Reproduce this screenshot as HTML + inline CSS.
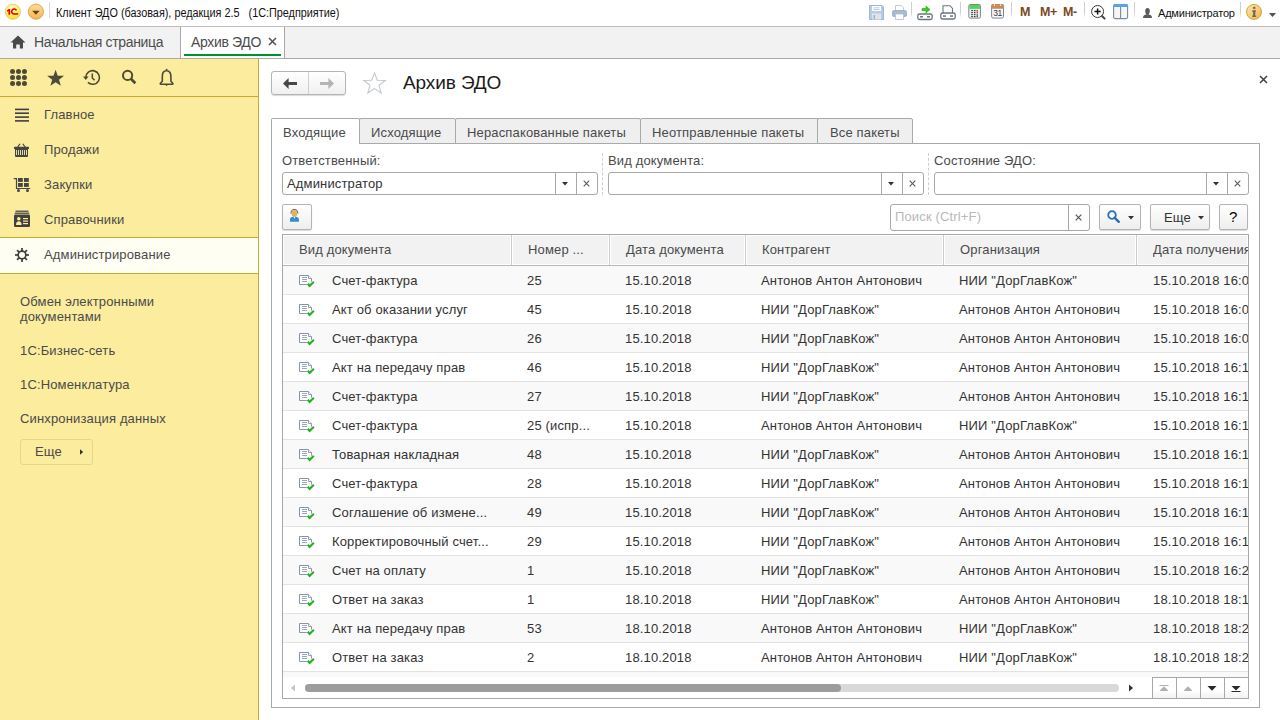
<!DOCTYPE html>
<html><head><meta charset="utf-8">
<style>
*{box-sizing:border-box;margin:0;padding:0}
html,body{width:1280px;height:720px;overflow:hidden;background:#fff;font-family:"Liberation Sans",sans-serif;color:#4d4d4d}
.a{position:absolute}
.t{position:absolute;white-space:nowrap;line-height:16px;letter-spacing:0.15px}
svg{position:absolute;overflow:visible}
</style></head><body>

<!-- ===== TITLE BAR ===== -->
<div class="a" style="left:0;top:26px;width:1280px;height:1px;background:#bcbcbc"></div>
<!-- logo -->
<svg style="left:0;top:0" width="50" height="25" viewBox="0 0 50 25">
 <defs><radialGradient id="g1c" cx="0.45" cy="0.3" r="0.75"><stop offset="0" stop-color="#fffbd0"/><stop offset="0.55" stop-color="#fff06a"/><stop offset="1" stop-color="#ffd800"/></radialGradient>
 <linearGradient id="gdd" x1="0" y1="0" x2="0" y2="1"><stop offset="0" stop-color="#ffdc95"/><stop offset="1" stop-color="#f8b350"/></linearGradient></defs>
 <circle cx="12.9" cy="11.7" r="7.6" fill="url(#g1c)" stroke="#dcc86a" stroke-width="0.8"/>
 <path d="M7 10.3 L9 9 H10.2 V14.8 H8.4 V11 L7 11.8 Z" fill="#e20000"/>
 <path d="M16.4 10.4 A2.5 2.5 0 1 0 13.9 14 H18.2" fill="none" stroke="#e20000" stroke-width="1.6"/>
 <circle cx="35.9" cy="11.7" r="7.6" fill="url(#gdd)" stroke="#c9a050" stroke-width="0.8"/>
 <path d="M32.2 10.8 H39.6 L35.9 14.8 Z" fill="#5a4326"/>
</svg>
<div class="a" style="left:49px;top:2px;width:1px;height:16px;background:#d8d8d8"></div>
<div class="t" style="left:56px;top:5px;font-size:12px;letter-spacing:0;transform:scaleX(0.903);transform-origin:0 0;color:#111">Клиент ЭДО (базовая), редакция 2.5&nbsp;&nbsp;&nbsp;(1С:Предприятие)</div>

<!-- right toolbar icons -->
<svg style="left:869px;top:5px" width="15" height="15" viewBox="0 0 15 15">
 <path d="M0.5 0.5 H13 L14.5 2 V14.5 H0.5 Z" fill="#b7cce6" stroke="#9fb5d3"/>
 <rect x="3" y="1" width="9" height="5" fill="#fff"/>
 <path d="M4.5 2.8 H10.5 M4.5 4.5 H10.5" stroke="#a9bcd6" stroke-width="0.8"/>
 <rect x="3" y="8.5" width="9" height="6" fill="#e2e5e8"/>
 <rect x="4.5" y="10" width="1.6" height="4" fill="#9fb5d3"/>
</svg>
<svg style="left:892px;top:5px" width="15" height="15" viewBox="0 0 15 15">
 <path d="M3.5 0.5 H9.5 L11.5 2.5 V6 H3.5 Z" fill="#fff" stroke="#b0bfd2" stroke-width="0.8"/>
 <rect x="0.5" y="5.5" width="14" height="6" rx="1.5" fill="#a9bbd2" stroke="#98abc4" stroke-width="0.8"/>
 <rect x="3.5" y="9" width="8" height="5.5" fill="#fff" stroke="#b0bfd2" stroke-width="0.8"/>
</svg>
<div class="a" style="left:911px;top:2px;width:1px;height:16px;background:linear-gradient(#cfcfcf 65%,#fff)"></div>
<svg style="left:917px;top:5px" width="16" height="15" viewBox="0 0 16 15">
 <path d="M5 3.5 H9 V1 L13 4.5 L9 8 V5.5 H5 Z" fill="#2fd11c" stroke="#1aa80c" stroke-width="0.6"/>
 <rect x="0.8" y="9" width="14.4" height="5.5" rx="1.8" fill="#fff" stroke="#6d7581" stroke-width="1.3"/>
 <rect x="3" y="11" width="3" height="1.5" fill="#6d7581"/><rect x="10" y="11" width="3" height="1.5" fill="#6d7581"/>
</svg>
<svg style="left:940px;top:5px" width="16" height="15" viewBox="0 0 16 15">
 <path d="M3 0.7 H10 L12.5 3.5 V9 H3 Z" fill="#fff" stroke="#6d7581" stroke-width="1.1"/>
 <rect x="0.8" y="8" width="14.4" height="6" rx="1.8" fill="#fff" stroke="#6d7581" stroke-width="1.3"/>
 <rect x="3" y="10.3" width="3" height="1.5" fill="#6d7581"/><rect x="10" y="10.3" width="3" height="1.5" fill="#6d7581"/>
</svg>
<div class="a" style="left:960px;top:2px;width:1px;height:16px;background:linear-gradient(#cfcfcf 65%,#fff)"></div>
<svg style="left:962px;top:0" width="50" height="24" viewBox="0 0 50 24">
 <rect x="6.8" y="4.5" width="11.6" height="13.6" rx="1.3" fill="#eef3f8" stroke="#7e8893" stroke-width="1"/>
 <rect x="7.3" y="5" width="10.6" height="3.9" fill="#4fd64f"/>
 <g fill="#3a3a3a">
  <rect x="9.2" y="9.9" width="1.6" height="1.2"/><rect x="11.9" y="9.9" width="1.6" height="1.2"/>
  <rect x="9.2" y="11.9" width="1.6" height="1.2"/><rect x="11.9" y="11.9" width="1.6" height="1.2"/><rect x="14.7" y="12" width="1.1" height="1"/>
  <rect x="9.2" y="13.9" width="1.6" height="1.2"/><rect x="11.9" y="13.9" width="1.6" height="1.2"/><rect x="14.6" y="13.6" width="1.2" height="1.2"/>
  <rect x="9.2" y="15.9" width="1.6" height="1.2"/><rect x="11.9" y="15.9" width="1.6" height="1.2"/><rect x="14.6" y="15.2" width="1.2" height="2"/>
 </g>
 <rect x="14.5" y="9.7" width="1.4" height="2.1" rx="0.5" fill="#f03030"/>
 <rect x="29.6" y="4.5" width="11.9" height="13.6" rx="1.6" fill="#f4f7fb" stroke="#7e8893" stroke-width="1"/>
 <path d="M29.1 8.8 V6.2 Q29.1 4 31.3 4 H39.8 Q42 4 42 6.2 V8.8 Z" fill="#c98b5a"/>
 <rect x="32.1" y="4.4" width="0.9" height="1.6" fill="#fff"/><rect x="38.2" y="4.4" width="0.9" height="1.6" fill="#fff"/>
 <text x="35.6" y="16.3" text-anchor="middle" font-family="Liberation Sans" font-size="8.5" fill="#333" letter-spacing="-0.3">31</text>
</svg>
<div class="a" style="left:1011px;top:2px;width:1px;height:16px;background:linear-gradient(#cfcfcf 65%,#fff)"></div>
<div class="t" style="left:1020px;top:4px;font-size:12.5px;font-weight:bold;color:#7b4a1f;letter-spacing:0">M</div>
<div class="t" style="left:1040px;top:4px;font-size:12.5px;font-weight:bold;color:#7b4a1f;letter-spacing:-0.3px">M+</div>
<div class="t" style="left:1063px;top:4px;font-size:12.5px;font-weight:bold;color:#7b4a1f;letter-spacing:-0.3px">M-</div>
<div class="a" style="left:1084px;top:2px;width:1px;height:16px;background:linear-gradient(#cfcfcf 65%,#fff)"></div>
<svg style="left:1085px;top:0" width="75" height="24" viewBox="0 0 75 24">
 <circle cx="12.6" cy="11.5" r="6" fill="#fff" stroke="#3a3a3a" stroke-width="1"/>
 <path d="M9.5 11.5 H15.7 M12.6 8.4 V14.6" stroke="#111" stroke-width="1.5"/>
 <path d="M17 16 L19.6 18.6" stroke="#444" stroke-width="2" stroke-linecap="round"/>
 <rect x="28.6" y="4.6" width="14" height="14" rx="1.5" fill="#f4f6f8" stroke="#7b8a99" stroke-width="1.1"/>
 <path d="M28.1 6.2 Q28.1 4.1 30.2 4.1 H41 Q43.1 4.1 43.1 6.2 V6.9 H28.1 Z" fill="#58a2e8"/>
 <path d="M35.6 6.9 V18.6" stroke="#7b8a99" stroke-width="1.1"/>
 <path d="M58 18 Q58 15 61.5 14.6 Q60.2 13.3 60.2 11 Q60.2 8 62.5 8 Q64.8 8 64.8 11 Q64.8 13.3 63.5 14.6 Q67 15 67 18 Z" fill="#5a5a5a"/>
</svg>
<div class="a" style="left:1134px;top:2px;width:1px;height:16px;background:linear-gradient(#cfcfcf 65%,#fff)"></div>

<div class="t" style="left:1158px;top:5px;font-size:11px;letter-spacing:-0.2px;color:#111">Администратор</div>
<div class="a" style="left:1240px;top:2px;width:1px;height:16px;background:linear-gradient(#cfcfcf 65%,#fff)"></div>
<svg style="left:1238px;top:0" width="42" height="24" viewBox="0 0 42 24">
 <defs><linearGradient id="ginf" x1="0" y1="0" x2="1" y2="1"><stop offset="0" stop-color="#fde6b0"/><stop offset="1" stop-color="#f6b445"/></linearGradient></defs>
 <circle cx="16" cy="11.9" r="7.5" fill="url(#ginf)" stroke="#c99c35" stroke-width="0.9"/>
 <g fill="#6e6a5e">
 <ellipse cx="16.2" cy="7.9" rx="1.4" ry="1.1"/>
 <rect x="14.2" y="10.4" width="3.8" height="1.3"/>
 <rect x="15.1" y="10.4" width="2.2" height="6.4"/>
 <rect x="14.1" y="15.6" width="4.1" height="1.3"/>
 </g>
 <path d="M31 13 H38 L34.5 17 Z" fill="#505050"/>
</svg>
<!-- ===== TAB BAR ===== -->
<div class="a" style="left:0;top:27px;width:1280px;height:31px;background:#f2f2f2"></div>
<div class="a" style="left:0;top:58px;width:1280px;height:1px;background:#a9a9a9"></div>
<div class="a" style="left:180px;top:27px;width:1px;height:31px;background:#a9a9a9"></div>
<div class="a" style="left:181px;top:27px;width:103px;height:31px;background:#fff"></div>
<div class="a" style="left:284px;top:27px;width:1px;height:31px;background:#a9a9a9"></div>
<div class="a" style="left:184px;top:54px;width:97px;height:2px;background:#00922e"></div>
<svg style="left:10px;top:35px" width="16" height="14" viewBox="0 0 16 14">
 <path d="M8 0.5 L15.5 7.5 H13 V13.5 H9.8 V9.5 H6.2 V13.5 H3 V7.5 H0.5 Z" fill="#4a4a4a"/>
</svg>
<div class="t" style="left:34px;top:34px;font-size:14px;letter-spacing:-0.35px;color:#4d4d4d">Начальная страница</div>
<div class="t" style="left:191px;top:34px;font-size:14px;letter-spacing:-0.35px;color:#4d4d4d">Архив ЭДО</div>
<svg style="left:268px;top:37px" width="9" height="9" viewBox="0 0 9 9"><path d="M1 1 L8 8 M8 1 L1 8" stroke="#555" stroke-width="1.6"/></svg>

<!-- ===== SIDEBAR ===== -->
<div class="a" style="left:0;top:59px;width:258px;height:661px;background:#fbec9e"></div>
<div class="a" style="left:258px;top:59px;width:1px;height:661px;background:#c6ab2c"></div>
<div class="a" style="left:0;top:96px;width:258px;height:1px;background:#c6ab2c"></div>
<div class="a" style="left:0;top:237px;width:258px;height:37px;background:#fffef2;border-top:1px solid #c6ab2c;border-bottom:1px solid #c6ab2c"></div>

<svg style="left:10px;top:69px" width="18" height="18" viewBox="0 0 18 18" fill="#4d4a38">
 <circle cx="2.55" cy="2.55" r="2.5"/> <circle cx="8.5" cy="2.55" r="2.5"/> <circle cx="14.45" cy="2.55" r="2.5"/> <circle cx="2.55" cy="8.5" r="2.5"/> <circle cx="8.5" cy="8.5" r="2.5"/> <circle cx="14.45" cy="8.5" r="2.5"/> <circle cx="2.55" cy="14.45" r="2.5"/> <circle cx="8.5" cy="14.45" r="2.5"/> <circle cx="14.45" cy="14.45" r="2.5"/>
</svg>
<svg style="left:47px;top:69px" width="18" height="18" viewBox="0 0 18 18"><path d="M8.60 0.70 L10.72 6.69 L17.06 6.85 L12.02 10.71 L13.83 16.80 L8.60 13.20 L3.37 16.80 L5.18 10.71 L0.14 6.85 L6.48 6.69 Z" fill="#4d4a38"/></svg>
<svg style="left:83px;top:69px" width="18" height="18" viewBox="0 0 18 18">
 <path d="M2.8 8.6 A6.8 6.8 0 1 1 4.9 13.4" fill="none" stroke="#4d4a38" stroke-width="1.6"/>
 <path d="M0 7.6 L5.6 7.6 L2.8 11 Z" fill="#4d4a38"/>
 <path d="M9.3 4.4 V9 L11.6 11.3" fill="none" stroke="#4d4a38" stroke-width="1.5"/>
</svg>
<svg style="left:121px;top:69px" width="18" height="18" viewBox="0 0 18 18">
 <circle cx="6.6" cy="6.4" r="4.6" fill="none" stroke="#4d4a38" stroke-width="2"/>
 <path d="M9.8 9.6 L14.3 14.3" stroke="#4d4a38" stroke-width="2.8"/>
</svg>
<svg style="left:158px;top:69px" width="18" height="18" viewBox="0 0 18 18">
 <path d="M8.6 1.8 C5.3 1.8 4.3 4.6 4.3 7.4 V12.3 L2.4 14.3 Q2 15 2.8 15.2 H14.4 Q15.2 15 14.8 14.3 L12.9 12.3 V7.4 C12.9 4.6 11.9 1.8 8.6 1.8 Z" fill="none" stroke="#4d4a38" stroke-width="1.6" stroke-linejoin="round"/>
 <path d="M7.3 0.9 L8.6 -0.4 L9.9 0.9 Z" fill="#4d4a38"/>
 <path d="M7.1 15.8 L8.6 17 L10.1 15.8 Z" fill="#4d4a38"/>
</svg>

<svg style="left:15px;top:108px" width="15" height="14" viewBox="0 0 15 14" fill="#3e3e4a">
 <rect x="0" y="0.6" width="14" height="1.6"/><rect x="0" y="4.4" width="14" height="1.6"/><rect x="0" y="8.3" width="14" height="1.6"/><rect x="0" y="12.1" width="14" height="1.6"/>
</svg>
<svg style="left:0;top:0" width="40" height="280" viewBox="0 0 40 280">
 <!-- basket -->
 <path d="M17.3 147.5 L19.8 144.2 M25.5 147.5 L23 144.2" stroke="#454545" stroke-width="1.1" stroke-linecap="round"/>
 <rect x="14" y="146.8" width="15" height="2.2" rx="0.6" fill="#454545"/>
 <path d="M15 148.5 H28 V156 Q28 157 27 157 H16 Q15 157 15 156 Z" fill="#454545"/>
 <g fill="#fbec9e"><rect x="16.1" y="150" width="0.9" height="5"/><rect x="18.1" y="150" width="0.9" height="5"/><rect x="20.1" y="150" width="0.9" height="5"/><rect x="22.1" y="150" width="0.9" height="5"/><rect x="24.1" y="150" width="0.9" height="5"/><rect x="26.1" y="150" width="0.9" height="5"/></g>
 <!-- cart -->
 <path d="M14.2 178.6 H16.5 V188.5 H29.8" fill="none" stroke="#454545" stroke-width="1.2" stroke-linecap="round"/>
 <g fill="#454545"><rect x="18" y="178" width="4.8" height="3.9"/><rect x="24" y="178" width="4.8" height="3.9"/><rect x="18" y="183" width="4.8" height="3.9"/><rect x="24" y="183" width="4.8" height="3.9"/>
 <circle cx="18.5" cy="190.6" r="1.5"/><circle cx="27.5" cy="190.6" r="1.5"/></g>
 <!-- card -->
 <g fill="#404040">
 <rect x="15.5" y="210.6" width="13" height="1.2"/><rect x="14.8" y="212.6" width="14.4" height="1.2"/>
 <rect x="14" y="214.6" width="16" height="12.4" rx="1.2"/>
 </g>
 <g fill="#fbec9e">
 <circle cx="18.8" cy="218.8" r="1.8"/>
 <path d="M16 225 Q16 221.3 18.8 221.3 Q21.6 221.3 21.6 225 Z"/>
 <rect x="23" y="218" width="5" height="1.2"/><rect x="23" y="220.5" width="5" height="1.2"/><rect x="23" y="223" width="5" height="1.2"/>
 </g>
 <!-- gear -->
 <g transform="translate(22 255)" fill="#3f3f3f">
  <rect x="-0.85" y="-7" width="1.7" height="14"/>
  <rect x="-0.85" y="-7" width="1.7" height="14" transform="rotate(45)"/>
  <rect x="-0.85" y="-7" width="1.7" height="14" transform="rotate(90)"/>
  <rect x="-0.85" y="-7" width="1.7" height="14" transform="rotate(135)"/>
  <circle r="4.7"/>
  <circle r="3" fill="#fffef2"/>
 </g>
</svg>
<div class="t" style="left:44px;top:107px;font-size:13px;color:#4a4a4a">Главное</div>
<div class="t" style="left:44px;top:142px;font-size:13px;color:#4a4a4a">Продажи</div>
<div class="t" style="left:44px;top:177px;font-size:13px;color:#4a4a4a">Закупки</div>
<div class="t" style="left:44px;top:212px;font-size:13px;color:#4a4a4a">Справочники</div>
<div class="t" style="left:44px;top:247px;font-size:13px;color:#4a4a4a">Администрирование</div>

<div class="t" style="left:20px;top:294px;font-size:13px;line-height:15px;color:#4a4a4a">Обмен электронными<br>документами</div>
<div class="t" style="left:20px;top:343px;font-size:13px;color:#4a4a4a">1С:Бизнес-сеть</div>
<div class="t" style="left:20px;top:377px;font-size:13px;color:#4a4a4a">1С:Номенклатура</div>
<div class="t" style="left:20px;top:411px;font-size:13px;color:#4a4a4a">Синхронизация данных</div>
<div class="a" style="left:20px;top:439px;width:73px;height:26px;border:1px solid #e6d58a;border-radius:3px;background:#fbec9e"></div>
<div class="t" style="left:35px;top:444px;font-size:13px;color:#4a4a4a">Еще</div>
<svg style="left:80px;top:449px" width="4" height="6" viewBox="0 0 4 6"><path d="M0 0.2 L3.2 3 L0 5.8 Z" fill="#333"/></svg>

<!-- ===== FORM HEADER ===== -->
<div class="a" style="left:271px;top:71px;width:75px;height:24px;border:1px solid #b4b4b4;border-radius:3px;background:linear-gradient(#ffffff,#f0f0f0);box-shadow:0 1px 1px rgba(0,0,0,0.15)"></div>
<div class="a" style="left:308px;top:72px;width:1px;height:22px;background:#cfcfcf"></div>
<svg style="left:283px;top:78px" width="14" height="11" viewBox="0 0 14 11"><path d="M0 5.5 L5.6 0 V4 H14 V7 H5.6 V11 Z" fill="#484848"/></svg>
<svg style="left:320px;top:78px" width="14" height="11" viewBox="0 0 14 11"><path d="M14 5.5 L8.4 0 V4 H0 V7 H8.4 V11 Z" fill="#b4b4b4"/></svg>
<svg style="left:362px;top:72px" width="25" height="22" viewBox="0 0 25 22">
 <path d="M12.5 1 L15.3 8.2 L23.3 8.4 L17 13.3 L19.2 21 L12.5 16.6 L5.8 21 L8 13.3 L1.7 8.4 L9.7 8.2 Z" fill="none" stroke="#c5c9cf" stroke-width="1.1" stroke-linejoin="miter"/>
</svg>
<div class="t" style="left:403px;top:72px;font-size:19px;line-height:22px;letter-spacing:-0.1px;color:#1a1a1a">Архив ЭДО</div>
<svg style="left:1259px;top:75px" width="9" height="9" viewBox="0 0 9 9"><path d="M1 1 L8 8 M8 1 L1 8" stroke="#404040" stroke-width="1.5"/></svg>

<!-- page tabs -->
<div class="a" style="left:271px;top:143px;width:989px;height:565px;border:1px solid #a9a9a9;background:#fff"></div>
<div class="a" style="left:271px;top:118px;width:89px;height:26px;border:1px solid #a9a9a9;border-bottom:none;background:#fff;border-radius:2px 2px 0 0"></div>
<div class="a" style="left:359px;top:118px;width:97px;height:26px;border:1px solid #a9a9a9;background:#efefef;border-radius:2px 2px 0 0"></div>
<div class="a" style="left:455px;top:118px;width:186px;height:26px;border:1px solid #a9a9a9;background:#efefef;border-radius:2px 2px 0 0"></div>
<div class="a" style="left:640px;top:118px;width:179px;height:26px;border:1px solid #a9a9a9;background:#efefef;border-radius:2px 2px 0 0"></div>
<div class="a" style="left:817px;top:118px;width:96px;height:26px;border:1px solid #a9a9a9;background:#efefef;border-radius:2px 2px 0 0"></div>
<div class="a" style="left:272px;top:143px;width:87px;height:1px;background:#fff"></div>
<div class="t" style="left:283px;top:125px;font-size:13px;color:#4a4a4a">Входящие</div>
<div class="t" style="left:371px;top:125px;font-size:13px;color:#4a4a4a">Исходящие</div>
<div class="t" style="left:467px;top:125px;font-size:13px;color:#4a4a4a">Нераспакованные пакеты</div>
<div class="t" style="left:652px;top:125px;font-size:13px;color:#4a4a4a">Неотправленные пакеты</div>
<div class="t" style="left:830px;top:125px;font-size:13px;color:#4a4a4a">Все пакеты</div>

<!-- filters -->
<div class="t" style="left:282px;top:153px;font-size:13px;color:#4a4a4a">Ответственный:</div>
<div class="t" style="left:608px;top:153px;font-size:13px;color:#4a4a4a">Вид документа:</div>
<div class="t" style="left:934px;top:153px;font-size:13px;color:#4a4a4a">Состояние ЭДО:</div>

<div class="a" style="left:282px;top:172px;width:316px;height:23px;border:1px solid #a8a8a8;border-radius:3px;background:#fff"></div>
<div class="a" style="left:555px;top:173px;width:1px;height:21px;background:#a8a8a8"></div>
<div class="a" style="left:576px;top:173px;width:1px;height:21px;background:#a8a8a8"></div>
<div class="t" style="left:287px;top:176px;font-size:13px;color:#333">Администратор</div>

<div class="a" style="left:608px;top:172px;width:316px;height:23px;border:1px solid #a8a8a8;border-radius:3px;background:#fff"></div>
<div class="a" style="left:881px;top:173px;width:1px;height:21px;background:#a8a8a8"></div>
<div class="a" style="left:902px;top:173px;width:1px;height:21px;background:#a8a8a8"></div>

<div class="a" style="left:934px;top:172px;width:315px;height:23px;border:1px solid #a8a8a8;border-radius:3px;background:#fff"></div>
<div class="a" style="left:1206px;top:173px;width:1px;height:21px;background:#a8a8a8"></div>
<div class="a" style="left:1227px;top:173px;width:1px;height:21px;background:#a8a8a8"></div>

<div class="a" style="left:602px;top:153px;width:0;height:42px;border-left:1px dashed #cfcfcf"></div>
<div class="a" style="left:928px;top:153px;width:0;height:42px;border-left:1px dashed #cfcfcf"></div>
<svg style="left:562px;top:182px" width="6" height="4" viewBox="0 0 6 4"><path d="M0 0 H6 L3 3.5 Z" fill="#333"/></svg>
<svg style="left:583px;top:180px" width="7" height="7" viewBox="0 0 7 7"><path d="M0.7 0.7 L6.3 6.3 M6.3 0.7 L0.7 6.3" stroke="#5a5a5a" stroke-width="1.1"/></svg>
<svg style="left:888px;top:182px" width="6" height="4" viewBox="0 0 6 4"><path d="M0 0 H6 L3 3.5 Z" fill="#333"/></svg>
<svg style="left:909px;top:180px" width="7" height="7" viewBox="0 0 7 7"><path d="M0.7 0.7 L6.3 6.3 M6.3 0.7 L0.7 6.3" stroke="#5a5a5a" stroke-width="1.1"/></svg>
<svg style="left:1213px;top:182px" width="6" height="4" viewBox="0 0 6 4"><path d="M0 0 H6 L3 3.5 Z" fill="#333"/></svg>
<svg style="left:1234px;top:180px" width="7" height="7" viewBox="0 0 7 7"><path d="M0.7 0.7 L6.3 6.3 M6.3 0.7 L0.7 6.3" stroke="#5a5a5a" stroke-width="1.1"/></svg>

<!-- toolbar -->
<div class="a" style="left:282px;top:204px;width:30px;height:26px;border:1px solid #b4b4b4;border-radius:2px;background:linear-gradient(#ffffff,#eeeeee);box-shadow:0 1px 1px rgba(0,0,0,0.15)"></div>
<svg style="left:289px;top:209px" width="11" height="13" viewBox="0 0 11 13">
 <path d="M2 4.6 Q1.9 0.5 5.4 0.5 Q8.9 0.5 8.8 4.6" fill="none" stroke="#4a3a22" stroke-width="0.9"/>
 <ellipse cx="5.4" cy="4.4" rx="2.9" ry="3.3" fill="#eab060"/>
 <path d="M1 12.8 V10.3 Q1 8.2 3 7.9 L5.4 7.6 L7.8 7.9 Q9.9 8.2 9.9 10.3 V12.8 Z" fill="#2f8fc8"/>
 <path d="M4.6 7.8 L5.4 10 L6.2 7.8 Z" fill="#fff"/>
</svg>
<div class="a" style="left:890px;top:204px;width:200px;height:27px;border:1px solid #a8a8a8;border-radius:3px;background:#fff"></div>
<div class="a" style="left:1068px;top:205px;width:1px;height:25px;background:#a8a8a8"></div>
<div class="t" style="left:895px;top:209px;font-size:13px;color:#b8b8b8">Поиск (Ctrl+F)</div>
<svg style="left:1075px;top:214px" width="7" height="7" viewBox="0 0 7 7"><path d="M0.7 0.7 L6.3 6.3 M6.3 0.7 L0.7 6.3" stroke="#555" stroke-width="1.2"/></svg>
<div class="a" style="left:1099px;top:204px;width:42px;height:26px;border:1px solid #b4b4b4;border-radius:2px;background:linear-gradient(#ffffff,#eeeeee);box-shadow:0 1px 1px rgba(0,0,0,0.15)"></div>
<svg style="left:1107px;top:210px" width="13" height="13" viewBox="0 0 13 13">
 <circle cx="5" cy="5" r="3.8" fill="none" stroke="#2d6fb0" stroke-width="1.8"/>
 <path d="M7.8 7.8 L11.8 11.8" stroke="#2d6fb0" stroke-width="2.4" stroke-linecap="round"/>
</svg>
<svg style="left:1128px;top:216px" width="6" height="4" viewBox="0 0 6 4"><path d="M0 0 H6 L3 3.5 Z" fill="#333"/></svg>
<div class="a" style="left:1150px;top:204px;width:60px;height:26px;border:1px solid #b4b4b4;border-radius:2px;background:linear-gradient(#ffffff,#eeeeee);box-shadow:0 1px 1px rgba(0,0,0,0.15)"></div>
<div class="t" style="left:1164px;top:210px;font-size:13px;color:#333">Еще</div>
<svg style="left:1198px;top:216px" width="6" height="4" viewBox="0 0 6 4"><path d="M0 0 H6 L3 3.5 Z" fill="#333"/></svg>
<div class="a" style="left:1219px;top:204px;width:29px;height:26px;border:1px solid #b4b4b4;border-radius:2px;background:linear-gradient(#ffffff,#eeeeee);box-shadow:0 1px 1px rgba(0,0,0,0.15)"></div>
<div class="t" style="left:1229px;top:208px;font-size:15px;line-height:18px;color:#000">?</div>
<!-- ===== TABLE ===== -->
<style>
.rw{position:absolute;left:0;width:965px;height:28px;border-bottom:1px solid #e3e3e3;box-sizing:content-box}
.g{background:#f9f9f9}
.c{position:absolute;white-space:nowrap;line-height:16px;font-size:13px;color:#333;letter-spacing:0.15px}
.hc{position:absolute;top:235px;height:30px;border:1px solid #fff}
.hs{position:absolute;top:235px;width:1px;height:30px;background:#cdcdcd}
.ht{position:absolute;top:242px;white-space:nowrap;line-height:16px;font-size:13px;color:#4a4a4a;letter-spacing:0.15px}
</style>
<svg width="0" height="0" style="left:0;top:0"><defs>
<symbol id="dic" viewBox="0 0 16 13">
 <path d="M0.5 0.5 H9.5 L12.5 3.5 V9.5 H0.5 Z" fill="#fff" stroke="#8596ab"/>
 <path d="M9.5 0.5 V3.5 H12.5" fill="#fff" stroke="#8596ab" stroke-width="0.9"/>
 <path d="M3 2.5 H8 M3 4.5 H8 M3 6.5 H8" stroke="#9aa8b9" stroke-width="1"/>
 <path d="M8.7 8.7 L10.6 10.9 L14.8 6.7" fill="none" stroke="#fff" stroke-width="3.6"/>
 <path d="M8.7 8.7 L10.6 10.9 L14.8 6.7" fill="none" stroke="#22b022" stroke-width="2.1"/>
</symbol></defs></svg>
<div class="a" style="left:282px;top:234px;width:967px;height:465px;border:1px solid #a8a8a8;background:#fff"></div>
<div class="a" style="left:283px;top:235px;width:965px;height:30px;background:#f2f2f2"></div>
<div class="a" style="left:283px;top:265px;width:965px;height:1px;background:#b8b8b8"></div>
<div class="hc" style="left:283px;width:228px"></div>
<div class="hc" style="left:512px;width:97px"></div>
<div class="hc" style="left:610px;width:135px"></div>
<div class="hc" style="left:746px;width:197px"></div>
<div class="hc" style="left:944px;width:192px"></div>
<div class="hc" style="left:1137px;width:111px"></div>
<div class="hs" style="left:511px"></div>
<div class="hs" style="left:609px"></div>
<div class="hs" style="left:745px"></div>
<div class="hs" style="left:943px"></div>
<div class="hs" style="left:1136px"></div>
<div class="ht" style="left:299px">Вид документа</div>
<div class="ht" style="left:528px">Номер ...</div>
<div class="ht" style="left:626px">Дата документа</div>
<div class="ht" style="left:762px">Контрагент</div>
<div class="ht" style="left:960px">Организация</div>
<div class="ht" style="left:1153px;width:95px;overflow:hidden">Дата получения</div>
<div class="a" style="left:283px;top:266px;width:965px;height:432px;overflow:hidden">
<div class="rw g" style="top:0px"></div>
<div class="rw" style="top:29px"></div>
<div class="rw g" style="top:58px"></div>
<div class="rw" style="top:87px"></div>
<div class="rw g" style="top:116px"></div>
<div class="rw" style="top:145px"></div>
<div class="rw g" style="top:174px"></div>
<div class="rw" style="top:203px"></div>
<div class="rw g" style="top:232px"></div>
<div class="rw" style="top:261px"></div>
<div class="rw g" style="top:290px"></div>
<div class="rw" style="top:319px"></div>
<div class="rw g" style="top:348px"></div>
<div class="rw" style="top:377px"></div>
<div class="a g" style="left:0;top:406px;width:965px;height:5px"></div>
</div>
<svg style="left:299px;top:275px" width="16" height="13"><use href="#dic"/></svg>
<div class="c" style="left:332px;top:273px">Счет-фактура</div>
<div class="c" style="left:527px;top:273px">25</div>
<div class="c" style="left:625px;top:273px">15.10.2018</div>
<div class="c" style="left:761px;top:273px">Антонов Антон Антонович</div>
<div class="c" style="left:959px;top:273px">НИИ "ДорГлавКож"</div>
<div class="c" style="left:1153px;top:273px;width:95px;overflow:hidden">15.10.2018 16:0</div>
<svg style="left:299px;top:304px" width="16" height="13"><use href="#dic"/></svg>
<div class="c" style="left:332px;top:302px">Акт об оказании услуг</div>
<div class="c" style="left:527px;top:302px">45</div>
<div class="c" style="left:625px;top:302px">15.10.2018</div>
<div class="c" style="left:761px;top:302px">НИИ "ДорГлавКож"</div>
<div class="c" style="left:959px;top:302px">Антонов Антон Антонович</div>
<div class="c" style="left:1153px;top:302px;width:95px;overflow:hidden">15.10.2018 16:0</div>
<svg style="left:299px;top:333px" width="16" height="13"><use href="#dic"/></svg>
<div class="c" style="left:332px;top:331px">Счет-фактура</div>
<div class="c" style="left:527px;top:331px">26</div>
<div class="c" style="left:625px;top:331px">15.10.2018</div>
<div class="c" style="left:761px;top:331px">НИИ "ДорГлавКож"</div>
<div class="c" style="left:959px;top:331px">Антонов Антон Антонович</div>
<div class="c" style="left:1153px;top:331px;width:95px;overflow:hidden">15.10.2018 16:0</div>
<svg style="left:299px;top:362px" width="16" height="13"><use href="#dic"/></svg>
<div class="c" style="left:332px;top:360px">Акт на передачу прав</div>
<div class="c" style="left:527px;top:360px">46</div>
<div class="c" style="left:625px;top:360px">15.10.2018</div>
<div class="c" style="left:761px;top:360px">НИИ "ДорГлавКож"</div>
<div class="c" style="left:959px;top:360px">Антонов Антон Антонович</div>
<div class="c" style="left:1153px;top:360px;width:95px;overflow:hidden">15.10.2018 16:1</div>
<svg style="left:299px;top:391px" width="16" height="13"><use href="#dic"/></svg>
<div class="c" style="left:332px;top:389px">Счет-фактура</div>
<div class="c" style="left:527px;top:389px">27</div>
<div class="c" style="left:625px;top:389px">15.10.2018</div>
<div class="c" style="left:761px;top:389px">НИИ "ДорГлавКож"</div>
<div class="c" style="left:959px;top:389px">Антонов Антон Антонович</div>
<div class="c" style="left:1153px;top:389px;width:95px;overflow:hidden">15.10.2018 16:1</div>
<svg style="left:299px;top:420px" width="16" height="13"><use href="#dic"/></svg>
<div class="c" style="left:332px;top:418px">Счет-фактура</div>
<div class="c" style="left:527px;top:418px">25 (испр...</div>
<div class="c" style="left:625px;top:418px">15.10.2018</div>
<div class="c" style="left:761px;top:418px">Антонов Антон Антонович</div>
<div class="c" style="left:959px;top:418px">НИИ "ДорГлавКож"</div>
<div class="c" style="left:1153px;top:418px;width:95px;overflow:hidden">15.10.2018 16:1</div>
<svg style="left:299px;top:449px" width="16" height="13"><use href="#dic"/></svg>
<div class="c" style="left:332px;top:447px">Товарная накладная</div>
<div class="c" style="left:527px;top:447px">48</div>
<div class="c" style="left:625px;top:447px">15.10.2018</div>
<div class="c" style="left:761px;top:447px">НИИ "ДорГлавКож"</div>
<div class="c" style="left:959px;top:447px">Антонов Антон Антонович</div>
<div class="c" style="left:1153px;top:447px;width:95px;overflow:hidden">15.10.2018 16:1</div>
<svg style="left:299px;top:478px" width="16" height="13"><use href="#dic"/></svg>
<div class="c" style="left:332px;top:476px">Счет-фактура</div>
<div class="c" style="left:527px;top:476px">28</div>
<div class="c" style="left:625px;top:476px">15.10.2018</div>
<div class="c" style="left:761px;top:476px">НИИ "ДорГлавКож"</div>
<div class="c" style="left:959px;top:476px">Антонов Антон Антонович</div>
<div class="c" style="left:1153px;top:476px;width:95px;overflow:hidden">15.10.2018 16:1</div>
<svg style="left:299px;top:507px" width="16" height="13"><use href="#dic"/></svg>
<div class="c" style="left:332px;top:505px">Соглашение об измене...</div>
<div class="c" style="left:527px;top:505px">49</div>
<div class="c" style="left:625px;top:505px">15.10.2018</div>
<div class="c" style="left:761px;top:505px">НИИ "ДорГлавКож"</div>
<div class="c" style="left:959px;top:505px">Антонов Антон Антонович</div>
<div class="c" style="left:1153px;top:505px;width:95px;overflow:hidden">15.10.2018 16:1</div>
<svg style="left:299px;top:536px" width="16" height="13"><use href="#dic"/></svg>
<div class="c" style="left:332px;top:534px">Корректировочный счет...</div>
<div class="c" style="left:527px;top:534px">29</div>
<div class="c" style="left:625px;top:534px">15.10.2018</div>
<div class="c" style="left:761px;top:534px">НИИ "ДорГлавКож"</div>
<div class="c" style="left:959px;top:534px">Антонов Антон Антонович</div>
<div class="c" style="left:1153px;top:534px;width:95px;overflow:hidden">15.10.2018 16:1</div>
<svg style="left:299px;top:565px" width="16" height="13"><use href="#dic"/></svg>
<div class="c" style="left:332px;top:563px">Счет на оплату</div>
<div class="c" style="left:527px;top:563px">1</div>
<div class="c" style="left:625px;top:563px">15.10.2018</div>
<div class="c" style="left:761px;top:563px">НИИ "ДорГлавКож"</div>
<div class="c" style="left:959px;top:563px">Антонов Антон Антонович</div>
<div class="c" style="left:1153px;top:563px;width:95px;overflow:hidden">15.10.2018 16:2</div>
<svg style="left:299px;top:594px" width="16" height="13"><use href="#dic"/></svg>
<div class="c" style="left:332px;top:592px">Ответ на заказ</div>
<div class="c" style="left:527px;top:592px">1</div>
<div class="c" style="left:625px;top:592px">18.10.2018</div>
<div class="c" style="left:761px;top:592px">НИИ "ДорГлавКож"</div>
<div class="c" style="left:959px;top:592px">Антонов Антон Антонович</div>
<div class="c" style="left:1153px;top:592px;width:95px;overflow:hidden">18.10.2018 18:1</div>
<svg style="left:299px;top:623px" width="16" height="13"><use href="#dic"/></svg>
<div class="c" style="left:332px;top:621px">Акт на передачу прав</div>
<div class="c" style="left:527px;top:621px">53</div>
<div class="c" style="left:625px;top:621px">18.10.2018</div>
<div class="c" style="left:761px;top:621px">Антонов Антон Антонович</div>
<div class="c" style="left:959px;top:621px">НИИ "ДорГлавКож"</div>
<div class="c" style="left:1153px;top:621px;width:95px;overflow:hidden">18.10.2018 18:2</div>
<svg style="left:299px;top:652px" width="16" height="13"><use href="#dic"/></svg>
<div class="c" style="left:332px;top:650px">Ответ на заказ</div>
<div class="c" style="left:527px;top:650px">2</div>
<div class="c" style="left:625px;top:650px">18.10.2018</div>
<div class="c" style="left:761px;top:650px">Антонов Антон Антонович</div>
<div class="c" style="left:959px;top:650px">НИИ "ДорГлавКож"</div>
<div class="c" style="left:1153px;top:650px;width:95px;overflow:hidden">18.10.2018 18:2</div>

<svg style="left:290px;top:684px" width="6" height="8" viewBox="0 0 6 8"><path d="M5 0.5 V7.5 L1 4 Z" fill="#c4c4c4"/></svg>
<div class="a" style="left:305px;top:684px;width:814px;height:8px;border-radius:4px;background:#d9d9d9"></div>
<div class="a" style="left:305px;top:684px;width:536px;height:8px;border-radius:4px;background:#9d9d9d"></div>
<svg style="left:1128px;top:684px" width="6" height="8" viewBox="0 0 6 8"><path d="M1 0.5 V7.5 L5 4 Z" fill="#333"/></svg>
<div class="a" style="left:1152px;top:677px;width:97px;height:22px;border:1px solid #a8a8a8;background:linear-gradient(#ffffff 60%,#f2f2f2)"></div>
<div class="a" style="left:1176px;top:678px;width:1px;height:20px;background:#a8a8a8"></div>
<div class="a" style="left:1200px;top:678px;width:1px;height:20px;background:#a8a8a8"></div>
<div class="a" style="left:1224px;top:678px;width:1px;height:20px;background:#a8a8a8"></div>
<svg style="left:1159px;top:685px" width="10" height="7" viewBox="0 0 10 7"><rect x="0.5" y="0" width="9" height="1" fill="#b0b0b0"/><path d="M5 1.3 L9.5 6 H0.5 Z" fill="#b0b0b0"/></svg>
<svg style="left:1183px;top:685px" width="10" height="7" viewBox="0 0 10 7"><path d="M5 1.3 L9.5 6 H0.5 Z" fill="#b0b0b0"/></svg>
<svg style="left:1207px;top:685px" width="10" height="7" viewBox="0 0 10 7"><path d="M0.5 1 H9.5 L5 5.7 Z" fill="#2a2a2a"/></svg>
<svg style="left:1231px;top:685px" width="10" height="7" viewBox="0 0 10 7"><path d="M0.5 1 H9.5 L5 5.5 Z" fill="#2a2a2a"/><rect x="0.5" y="6" width="9" height="1" fill="#2a2a2a"/></svg>

</body></html>
